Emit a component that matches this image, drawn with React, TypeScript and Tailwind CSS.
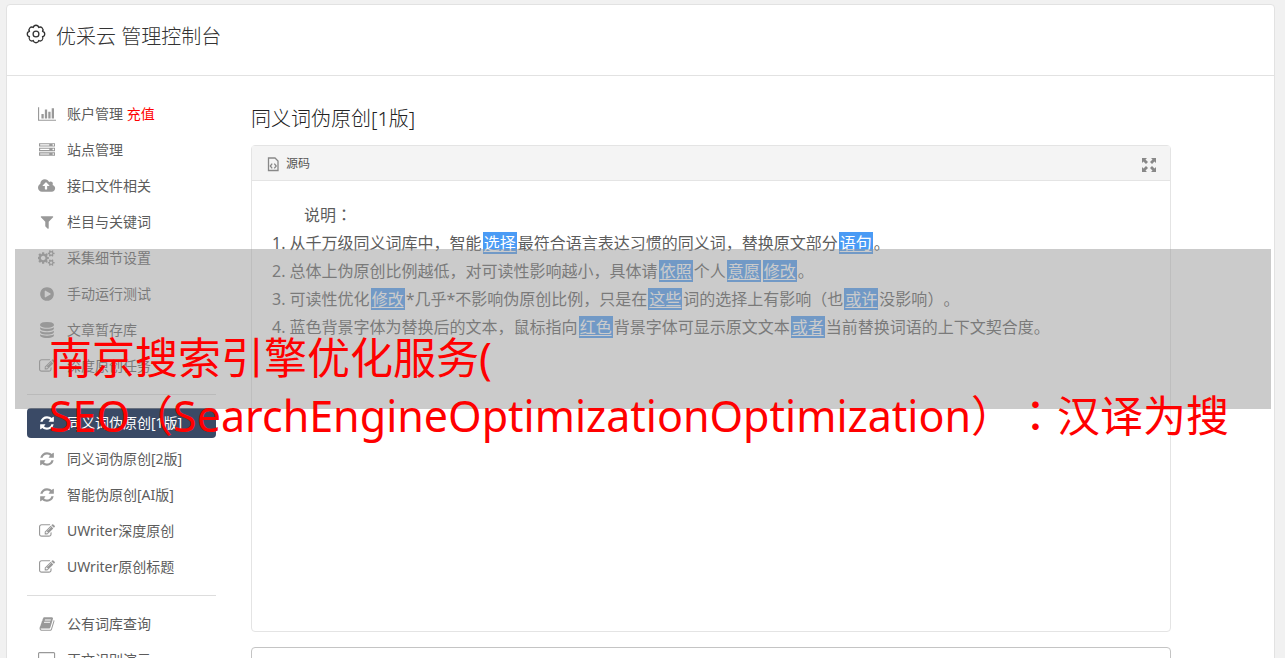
import React from 'react';

const ICONS: Record<string, { box: string; d: string }> = {
  chart: { box: '0 0 2048 1792', d: 'M640 896v512h-256v-512h256zm384-512v1024h-256v-1024h256zm1024 1152v128h-2048v-1536h128v1408h1920zm-640-896v768h-256v-768h256zm384-384v1152h-256v-1152h256z' },
  server: { box: '0 0 1792 1792', d: 'M128 1408h1024v-128h-1024v128zm0-512h1024v-128h-1024v128zm1568 448q0-40-28-68t-68-28-68 28-28 68 28 68 68 28 68-28 28-68zm-1568-960h1024v-128h-1024v128zm1568 448q0-40-28-68t-68-28-68 28-28 68 28 68 68 28 68-28 28-68zm0-512q0-40-28-68t-68-28-68 28-28 68 28 68 68 28 68-28 28-68zm96 832v384h-1792v-384h1792zm0-512v384h-1792v-384h1792zm0-512v384h-1792v-384h1792z' },
  cloud: { box: '0 0 1920 1792', d: 'M1280 864q0-14-9-23l-352-352q-9-9-23-9t-23 9l-351 351q-10 12-10 24 0 14 9 23t23 9h224v352q0 13 9.5 22.5t22.5 9.5h192q13 0 22.5-9.5t9.5-22.5v-352h224q13 0 22.5-9.5t9.5-22.5zm640 288q0 159-112.5 271.5t-271.5 112.5h-1088q-185 0-316.5-131.5t-131.5-316.5q0-130 70-240t188-165q-2-30-2-43 0-212 150-362t362-150q156 0 285.5 87t188.5 231q71-62 166-62 106 0 181 75t75 181q0 76-41 138 130 31 213.5 135.5t83.5 238.5z' },
  filter: { box: '0 0 1792 1792', d: 'M1595 295q17 41-14 70l-493 493v742q0 42-39 59-13 5-25 5-27 0-45-19l-256-256q-19-19-19-45v-486l-493-493q-31-29-14-70 17-39 59-39h1280q42 0 59 39z' },
  cogs: { box: '0 0 1920 1792', d: 'M832 896q0-106-75-181t-181-75-181 75-75 181 75 181 181 75 181-75 75-181zm768 512q0-52-38-90t-90-38-90 38-38 90q0 53 37.5 90.5t90.5 37.5 90.5-37.5 37.5-90.5zm0-1024q0-52-38-90t-90-38-90 38-38 90q0 53 37.5 90.5t90.5 37.5 90.5-37.5 37.5-90.5zm-384 421v185q0 10-7 19.5t-16 10.5l-155 24q-11 35-32 76 34 48 90 115 7 11 7 20 0 12-7 19-23 30-82.5 89.5t-78.5 59.5q-11 0-21-7l-115-90q-37 19-77 31-11 108-23 155-7 24-30 24h-186q-11 0-20-7.5t-10-17.5l-23-153q-34-10-75-31l-118 89q-7 7-20 7-11 0-21-8-144-133-144-160 0-9 7-19 10-14 41-53t47-61q-23-44-35-82l-152-24q-10-1-17-9.5t-7-19.5v-185q0-10 7-19.5t16-10.5l155-24q11-35 32-76-34-48-90-115-7-11-7-20 0-12 7-20 22-30 82-89t79-59q11 0 21 7l115 90q34-18 77-32 11-108 23-154 7-24 30-24h186q11 0 20 7.5t10 17.5l23 153q34 10 75 31l118-89q8-7 20-7 11 0 21 8 144 133 144 160 0 8-7 19-12 16-42 54t-45 60q23 48 34 82l152 23q10 2 17 10.5t7 19.5zm640 533v140q0 16-149 31-12 27-30 52 51 113 51 138 0 4-4 7-122 71-124 71-8 0-46-47t-52-68q-20 2-30 2t-30-2q-14 21-52 68t-46 47q-2 0-124-71-4-3-4-7 0-25 51-138-18-25-30-52-149-15-149-31v-140q0-16 149-31 13-29 30-52-51-113-51-138 0-4 4-7 4-2 35-20t59-34 30-16q8 0 46 46.5t52 67.5q20-2 30-2t30 2q51-71 92-112l6-2q4 0 124 70 4 3 4 7 0 25-51 138 17 23 30 52 149 15 149 31zm0-1024v140q0 16-149 31-12 27-30 52 51 113 51 138 0 4-4 7-122 71-124 71-8 0-46-47t-52-68q-20 2-30 2t-30-2q-14 21-52 68t-46 47q-2 0-124-71-4-3-4-7 0-25 51-138-18-25-30-52-149-15-149-31v-140q0-16 149-31 13-29 30-52-51-113-51-138 0-4 4-7 4-2 35-20t59-34 30-16q8 0 46 46.5t52 67.5q20-2 30-2t30 2q51-71 92-112l6-2q4 0 124 70 4 3 4 7 0 25-51 138 17 23 30 52 149 15 149 31z' },
  play: { box: '0 0 1792 1792', d: 'M896 128q209 0 385.5 103t279.5 279.5 103 385.5-103 385.5-279.5 279.5-385.5 103-385.5-103-279.5-279.5-103-385.5 103-385.5 279.5-279.5 385.5-103zm384 823q32-18 32-55t-32-55l-544-320q-31-19-64-1-32 19-32 56v640q0 37 32 56 16 8 32 8 17 0 32-9z' },
  database: { box: '0 0 1792 1792', d: 'M896 768q237 0 443-43t325-127v170q0 69-103 128t-280 93.5-385 34.5-385-34.5-280-93.5-103-128v-170q119 84 325 127t443 43zm0 768q237 0 443-43t325-127v170q0 69-103 128t-280 93.5-385 34.5-385-34.5-280-93.5-103-128v-170q119 84 325 127t443 43zm0-384q237 0 443-43t325-127v170q0 69-103 128t-280 93.5-385 34.5-385-34.5-280-93.5-103-128v-170q119 84 325 127t443 43zm0-1152q208 0 385 34.5t280 93.5 103 128v128q0 69-103 128t-280 93.5-385 34.5-385-34.5-280-93.5-103-128v-128q0-69 103-128t280-93.5 385-34.5z' },
  edit: { box: '0 0 1792 1792', d: 'M888 1184l116-116-152-152-116 116v56h96v96h56zm440-720q-16-16-33 1l-350 350q-17 17-1 33t33-1l350-350q17-17 1-33zm80 594v190q0 119-84.5 203.5t-203.5 84.5h-832q-119 0-203.5-84.5t-84.5-203.5v-832q0-119 84.5-203.5t203.5-84.5h832q63 0 117 25 15 7 18 23 3 17-9 29l-49 49q-14 14-32 8-23-6-45-6h-832q-66 0-113 47t-47 113v832q0 66 47 113t113 47h832q66 0 113-47t47-113v-126q0-13 9-22l64-64q15-15 35-7t20 29zm-96-738l288 288-672 672h-288v-288zm444 132l-92 92-288-288 92-92q28-28 68-28t68 28l152 152q28 28 28 68t-28 68z' },
  refresh: { box: '0 0 1792 1792', d: 'M1639 1056q0 5-1 7-64 268-268 434.5t-478 166.5q-146 0-282.5-55t-243.5-157l-129 129q-19 19-45 19t-45-19-19-45v-448q0-26 19-45t45-19h448q26 0 45 19t19 45-19 45l-137 137q71 66 161 102t187 36q134 0 250-65t186-179q11-17 53-117 8-23 30-23h192q13 0 22.5 9.5t9.5 22.5zm25-800v448q0 26-19 45t-45 19h-448q-26 0-45-19t-19-45 19-45l138-138q-148-137-349-137-134 0-250 65t-186 179q-11 17-53 117-8 23-30 23h-199q-13 0-22.5-9.5t-9.5-22.5v-7q65-268 270-434.5t480-166.5q146 0 284 55.5t245 156.5l130-129q19-19 45-19t45 19 19 45z' },
  book: { box: '0 0 1792 1792', d: 'M1703 478q40 57 18 129l-275 906q-19 64-76.5 107.5t-122.5 43.5h-923q-77 0-148.5-53.5t-99.5-131.5q-24-67-2-127 0-4 3-27t4-37q1-8-3-21.5t-3-19.5q2-11 8-21t16.5-23.5 16.5-23.5q23-38 45-91.5t30-91.5q3-10 .5-30t-.5-28q3-11 17-28t17-23q21-36 42-92t25-90q1-9-2.5-32t.5-28q4-13 22-30.5t22-22.5q19-26 42.5-84.5t27.5-96.5q1-8-3-25.5t-2-26.5q2-8 9-18t18-23 17-21q8-12 16.5-30.5t15-35 16-36 19.5-32 26.5-23.5 36-11.5 47.5 5.5l-1 3q38-9 51-9h761q74 0 114 56t18 130l-274 906q-36 119-71.5 153.5t-128.5 34.5h-869q-27 0-38 15-11 16-1 43 24 70 144 70h923q29 0 56-15.5t35-41.5l300-987q7-22 5-57 38 15 59 43zm-1064 2q-4 13 2 22.5t20 9.5h608q13 0 25.5-9.5t16.5-22.5l21-64q4-13-2-22.5t-20-9.5h-608q-13 0-25.5 9.5t-16.5 22.5zm-83 256q-4 13 2 22.5t20 9.5h608q13 0 25.5-9.5t16.5-22.5l21-64q4-13-2-22.5t-20-9.5h-608q-13 0-25.5 9.5t-16.5 22.5z' },
  desktop: { box: '0 0 1920 1792', d: 'M1792 992v-832q0-13-9.500-22.500t-22.500-9.500h-1600q-13 0-22.500 9.500t-9.500 22.500v832q0 13 9.500 22.500t22.500 9.500h1600q13 0 22.500-9.500t9.500-22.500zm128-832v1088q0 66-47 113t-113 47h-544q0 37 16 77.500t32 71 16 43.500q0 26-19 45t-45 19h-512q-26 0-45-19t-19-45q0-14 16-44t32-70 16-78h-544q-66 0-113-47t-47-113v-1088q0-66 47-113t113-47h1600q66 0 113 47t47 113z' },
};

type Item = { icon: string; label: string; extra?: string; active?: boolean };

const GROUPS: Item[][] = [
  [
    { icon: 'chart', label: '账户管理', extra: '充值' },
    { icon: 'server', label: '站点管理' },
    { icon: 'cloud', label: '接口文件相关' },
    { icon: 'filter', label: '栏目与关键词' },
    { icon: 'cogs', label: '采集细节设置' },
    { icon: 'play', label: '手动运行测试' },
    { icon: 'database', label: '文章暂存库' },
    { icon: 'edit', label: '深度原创任务' },
  ],
  [
    { icon: 'refresh', label: '同义词伪原创[1版]', active: true },
    { icon: 'refresh', label: '同义词伪原创[2版]' },
    { icon: 'refresh', label: '智能伪原创[AI版]' },
    { icon: 'edit', label: 'UWriter深度原创' },
    { icon: 'edit', label: 'UWriter原创标题' },
  ],
  [
    { icon: 'book', label: '公有词库查询' },
    { icon: 'desktop', label: '正文识别演示' },
  ],
];

function NavIcon({ name }: { name: string }) {
  const icon = ICONS[name];
  return (
    <span className="flex w-5 shrink-0 justify-center">
      <svg viewBox={icon.box} className="h-4 w-auto" fill="currentColor" aria-hidden="true">
        <path d={icon.d} />
      </svg>
    </span>
  );
}

function NavItem({ item }: { item: Item }) {
  return (
    <li>
      <a
        href="#"
        className={
          item.active
            ? 'flex h-[30px] items-center gap-2.5 rounded bg-[#3a4a66] px-2.5 text-white'
            : 'flex h-[30px] items-center gap-2.5 rounded px-2.5 text-[#999]'
        }
      >
        <NavIcon name={item.icon} />
        <span className={item.active ? 'text-white' : 'text-[#5c5c5c]'}>
          {item.label}
          {item.extra && <span className="text-[#f00]"> {item.extra}</span>}
        </span>
      </a>
    </li>
  );
}

function Swap({ children }: { children: React.ReactNode }) {
  return <u className="mx-px bg-[#4a9bf5] px-px text-white underline-offset-2">{children}</u>;
}

/* Full-width punctuation drawn in the middle of its cell. */
function Mid({ children }: { children: React.ReactNode }) {
  return <span className="font-['Noto_Sans_CJK_TC',sans-serif] leading-none">{children}</span>;
}

function GearIcon() {
  return (
    <svg viewBox="0 0 18 18" className="size-[18px] overflow-visible" fill="none" stroke="currentColor" strokeWidth="1.3" strokeLinejoin="round" aria-hidden="true">
      <circle cx="9" cy="9" r="2.9" />
      <path d="M6.300 2.500A2.750 2.750 0 0 1 11.700 2.500A2.750 2.750 0 0 1 15.500 6.300A2.750 2.750 0 0 1 15.500 11.700A2.750 2.750 0 0 1 11.700 15.500A2.750 2.750 0 0 1 6.300 15.500A2.750 2.750 0 0 1 2.500 11.700A2.750 2.750 0 0 1 2.500 6.300A2.750 2.750 0 0 1 6.300 2.500Z" />
    </svg>
  );
}

export default function App() {
  return (
    <div className="relative h-screen overflow-hidden bg-[#f1f1f1] pt-1 pr-2.5 pl-1.5 font-['Noto_Sans','Noto_Sans_CJK_SC',sans-serif] [text-spacing-trim:space-all]">
      <div className="min-h-full rounded-t border border-[#e2e2e2] bg-white">
        <header className="flex h-[71px] items-start gap-[11px] border-b border-[#e2e2e2] px-5 pt-[17px] text-[#333]">
          <span className="pt-[3px]"><GearIcon /></span>
          <h1 className="text-xl leading-[30px] font-light">优采云 管理控制台</h1>
        </header>
        <div className="flex gap-[35px] px-5 pt-[23px]">
          <nav className="w-[189px] shrink-0 text-sm">
            {GROUPS.map((group, i) => (
              <ul key={i} className={i === 0 ? 'flex flex-col gap-1.5' : 'mt-[13px] flex flex-col gap-1.5 border-t border-[#ddd] pt-[13px]'}>
                {group.map((item) => (
                  <NavItem key={item.label} item={item} />
                ))}
              </ul>
            ))}
          </nav>
          <main className="mr-[83px] min-w-0 flex-1 pt-[5px]">
            <h2 className="text-xl leading-[30px] font-light text-[#222]">同义词伪原创[1版]</h2>
            <section className="mt-[11px] h-[487px] rounded border border-[#e4e4e4]">
              <div className="flex h-[35px] items-center justify-between border-b border-[#e4e4e4] bg-[#f4f4f4] px-3.5 pt-0.5">
                <button type="button" className="flex items-center gap-1.5 text-xs text-[#555]">
                  <svg viewBox="0 0 14 16" className="h-4 w-3.5" fill="none" stroke="#888" strokeWidth="1.3" aria-hidden="true">
                    <path d="M2.500 2h6.500l3 3v9.500h-9.500zM6.200 7.700l-1.900 2.300 1.900 2.300M8.300 7.700l1.900 2.300-1.900 2.300" />
                  </svg>
                  源码
                </button>
                <button type="button" aria-label="全屏" className="pt-0.5 text-[#888]">
                  <svg viewBox="0 0 14 14" className="size-3.5" fill="currentColor" aria-hidden="true">
                    <path d="M0 0h5L3.500 1.500 6 4 4 6 1.500 3.500 0 5zM14 0v5l-1.500-1.500L10 6 8 4l2.500-2.500L9 0zM0 14V9l1.500 1.500L4 8l2 2-2.500 2.500L5 14zM14 14H9l1.500-1.500L8 10l2-2 2.500 2.500L14 9z" />
                  </svg>
                </button>
              </div>
              <div className="px-5 pt-5 text-base leading-7 text-[#5c5c5c]">
                <p className="pl-8">说明<Mid>：</Mid></p>
                <ol className="list-inside list-decimal">
                  <li>从千万级同义词库中，智能<Swap>选择</Swap>最符合语言表达习惯的同义词，替换原文部分<Swap>语句</Swap>。</li>
                  <li>总体上伪原创比例越低，对可读性影响越小，具体请<Swap>依照</Swap>个人<Swap>意愿</Swap><Swap>修改</Swap>。</li>
                  <li>可读性优化<Swap>修改</Swap>*几乎*不影响伪原创比例，只是在<Swap>这些</Swap>词的选择上有影响<Mid>（</Mid>也<Swap>或许</Swap>没影响<Mid>）</Mid>。</li>
                  <li>蓝色背景字体为替换后的文本，鼠标指向<Swap>红色</Swap>背景字体可显示原文文本<Swap>或者</Swap>当前替换词语的上下文契合度。</li>
                </ol>
              </div>
            </section>
            <div className="mt-[15px] h-10 rounded border border-[#c4c4c4]" />
          </main>
        </div>
      </div>
      <div className="absolute top-[249px] right-3.5 left-[15px] h-40 bg-[#979797]/50" />
      <div className="absolute top-[329px] left-[49px] text-[43px] leading-[58px] whitespace-nowrap text-[#f00]">
        <p>南京搜索引擎优化服务(</p>
        <p>SEO<Mid>（</Mid>SearchEngineOptimizationOptimization<Mid>）：</Mid>汉译为搜</p>
      </div>
    </div>
  );
}
